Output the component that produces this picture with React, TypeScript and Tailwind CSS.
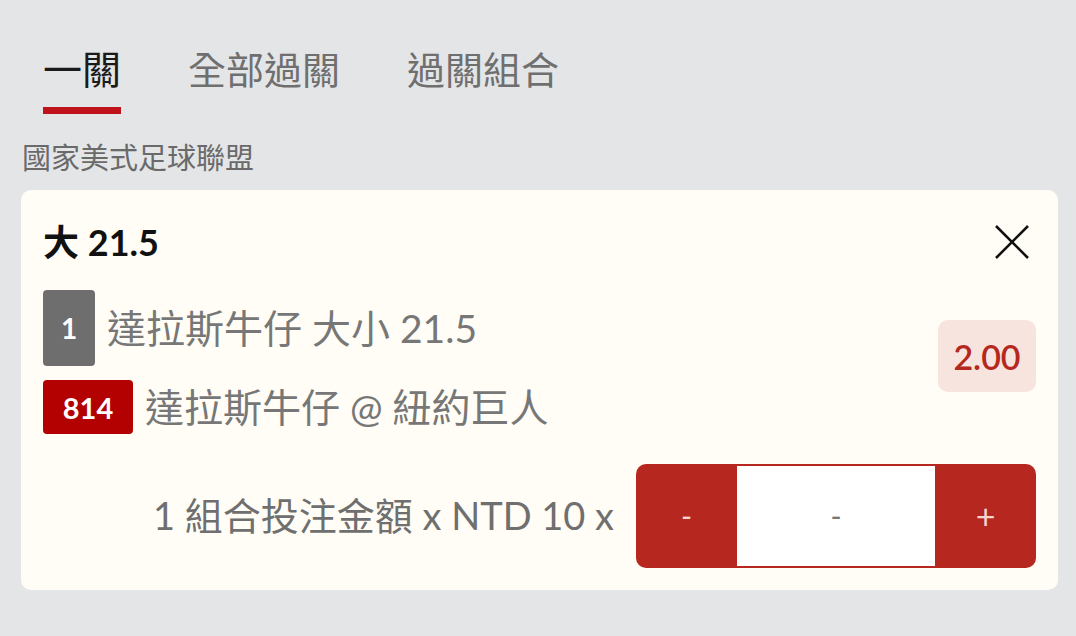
const font = { fontFamily: '"Lato", "Noto Sans CJK TC", sans-serif' };

function App() {
  return (
    <div className="h-[636px] w-[1076px] bg-[#e4e5e7]" style={font}>
      <div className="flex gap-[67px] pl-[43px] pt-[44px]">
        <div className="flex flex-col">
          <span className="text-[39px] leading-[50px] text-[#1a1a1a]">一關</span>
          <div className="mt-[13px] h-[7px] w-[78px] bg-[#c0121a]" />
        </div>
        <span className="text-[38px] leading-[50px] text-[#6f6f6f]">全部過關</span>
        <span className="text-[38px] leading-[50px] text-[#6f6f6f]">過關組合</span>
      </div>

      <div className="pl-[22px] pt-[24px] text-[29px] leading-[40px] text-[#6a6a6a]">國家美式足球聯盟</div>

      <div className="ml-[21px] mt-[12px] h-[400px] w-[1037px] rounded-[10px] bg-[#fffdf5] pl-[22px] pr-[22px] pt-[25px]">
        <div className="flex items-center justify-between">
          <span className="text-[36px] font-bold leading-[54px] text-[#111]">大 21.5</span>
          <svg className="mr-[6px] h-[36px] w-[36px]" viewBox="0 0 36 36" fill="none" stroke="#111" strokeWidth="2.6">
            <path d="M2 2 L34 34 M34 2 L2 34" />
          </svg>
        </div>

        <div className="mt-[21px] flex items-center justify-between">
          <div className="flex flex-col gap-[12px]">
            <div className="flex items-center gap-[12px]">
              <span className="flex h-[76px] w-[52px] items-center justify-center rounded-[4px] bg-[#6e6e6e] text-[28px] font-bold text-white">
                1
              </span>
              <span className="text-[39px] text-[#777]">達拉斯牛仔 大小 21.5</span>
            </div>
            <div className="flex items-center gap-[12px]">
              <span className="flex h-[54px] w-[90px] items-center justify-center rounded-[4px] bg-[#b30000] text-[29px] font-bold text-white">
                814
              </span>
              <span className="text-[39px] text-[#777]">達拉斯牛仔 @ 紐約巨人</span>
            </div>
          </div>
          <span className="mb-[14px] flex h-[72px] w-[98px] items-center justify-center rounded-[10px] bg-[#f7e4de] text-[34px] font-semibold text-[#b5281f]">
            2.00
          </span>
        </div>

        <div className="mt-[27px] flex items-center justify-end gap-[22px]">
          <span className="text-[38px] text-[#6f6f6f]">1 組合投注金額 x NTD 10 x</span>
          <div className="flex h-[104px] w-[400px] items-stretch overflow-hidden rounded-[10px] bg-[#b5271f]">
            <button className="w-[101px] text-[30px] text-[#f5d5d0]">-</button>
            <div className="my-[2px] flex flex-1 items-center justify-center bg-white text-[30px] text-[#777]">-</div>
            <button className="w-[101px] text-[34px] text-[#f5d5d0]">+</button>
          </div>
        </div>
      </div>
    </div>
  );
}

export default App;
